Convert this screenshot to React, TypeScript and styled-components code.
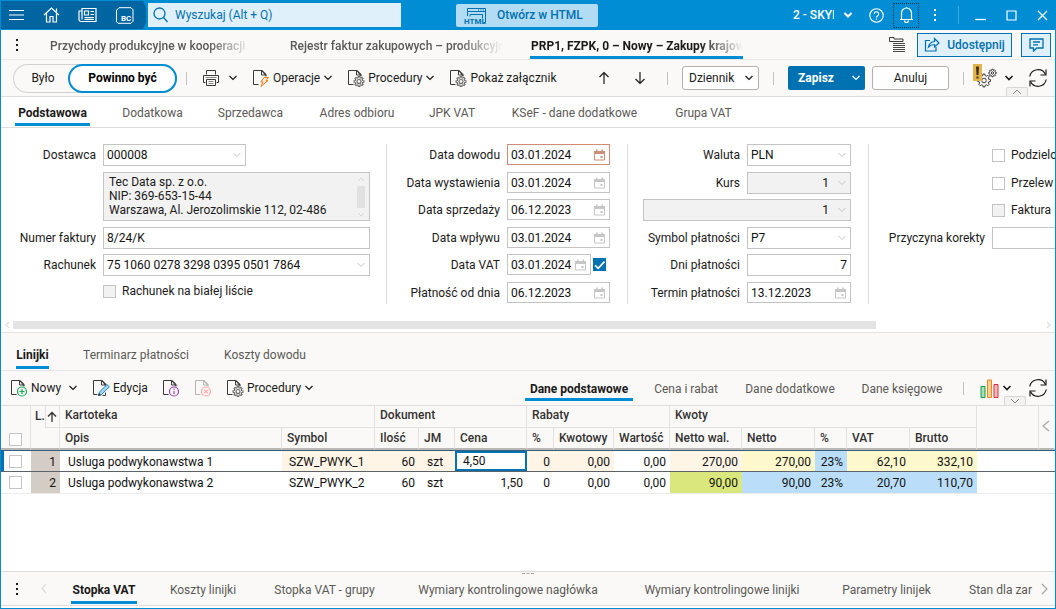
import React from 'react';
import styled, { createGlobalStyle, css } from 'styled-components';

const c = {
  blue: '#008dd4',
  deep: '#0065a0',
  action: '#0071b1',
  panel: '#faf9f8',
  line: '#dedddc',
  field: '#c4c4c4',
  ink: '#1b1a19',
  muted: '#5b5956',
};

const GlobalStyle = createGlobalStyle`
  *, *::before, *::after { box-sizing: border-box; }
  body { margin: 0; background: #fff; color: ${c.ink}; font: 12px/16px Roboto, "Liberation Sans", sans-serif; }
  button, input, select, textarea { font: inherit; color: inherit; margin: 0; padding: 0; border-radius: 0; }
  button { background: none; border: 0; cursor: pointer; display: inline-flex; align-items: center; justify-content: center; white-space: nowrap; }
  svg { display: block; flex: none; }
`;

const Window = styled.div`
  min-height: 100vh;
  display: flex;
  flex-direction: column;
  overflow: hidden;
  border: solid ${c.blue};
  border-width: 0 1px 1px;
`;

/* ---------- title bar ---------- */
const TitleBar = styled.header`
  display: flex;
  align-items: center;
  height: 30px;
  background: ${c.blue};
  color: #fff;
`;
const AppMenu = styled.nav`
  align-self: stretch;
  display: flex;
  align-items: center;
  width: 147px;
  padding-left: 7px;
  gap: 18px;
  background: ${c.deep};
  clip-path: polygon(0 1px, 142px 1px, 145px 8px, 145px 22px, 142px 29px, 0 29px);
`;
const SearchBox = styled.label`
  display: flex;
  align-items: center;
  gap: 7px;
  width: 253px;
  height: 24px;
  padding-left: 5px;
  background: #dff0fa;
  color: ${c.action};
`;
const SearchInput = styled.input`
  flex: 1;
  min-width: 0;
  border: 0;
  background: none;
  outline: 0;
  &::placeholder { color: ${c.action}; opacity: 1; }
`;
const HtmlButton = styled.button`
  justify-content: flex-start;
  width: 142px;
  height: 23px;
  margin-left: 55px;
  padding-left: 8px;
  gap: 9px;
  border-radius: 2px;
  background: #b2dcf3;
  color: ${c.action};
  font-weight: 500;
`;
const TitleActions = styled.div`
  display: flex;
  align-items: center;
  margin-left: auto;
  padding-right: 7px;
`;
const CompanyButton = styled.button`
  gap: 9px;
  margin-right: 16px;
  font-weight: 500;
`;
const CompanyName = styled.span`
  width: 41px;
  overflow: hidden;
  text-align: left;
`;
const BellButton = styled.button`
  width: 26px;
  height: 25px;
  margin: 0 14px 0 9px;
  border: 1px dotted #05314a;
`;
const WindowButtons = styled.div`
  display: flex;
  align-items: center;
  gap: 20px;
  margin-left: 21px;
  padding-left: 16px;
  border-left: 1px solid #3ba9e0;
  height: 18px;
`;

/* ---------- document tabs ---------- */
const DocBar = styled.div`
  display: flex;
  align-items: center;
  height: 30px;
  padding: 0 4px 0 14px;
  background: ${c.panel};
  border-bottom: 1px solid #ebe9e8;
`;
const DocTabs = styled.nav`
  display: flex;
  align-self: stretch;
  flex: 1;
  min-width: 0;
  overflow: hidden;
  gap: 27px;
  margin-left: 31px;
`;
const DocTab = styled.button<{ $active?: boolean; $fade: number }>`
  flex: 0 0 213px;
  justify-content: flex-start;
  padding: 3px 0 0;
  overflow: hidden;
  font-weight: ${p => (p.$active ? 700 : 500)};
  color: ${p => (p.$active ? c.ink : c.muted)};
  ${p => p.$active && css`
    padding: 6px 0 0 1px;
    border-bottom: 3px solid ${c.blue};
  `}
  & > span {
    width: ${p => p.$fade}px;
    overflow: hidden;
    text-align: left;
    mask-image: linear-gradient(to right, #000 calc(100% - 44px), transparent);
  }
`;
const DocActions = styled.div`
  display: flex;
  align-items: center;
  gap: 9px;
`;
const ShareButton = styled.button<{ $w: number }>`
  width: ${p => p.$w}px;
  height: 24px;
  gap: 7px;
  border: 1px solid ${c.action};
  background: #dff0fa;
  color: ${c.action};
  font-weight: 500;
`;

/* ---------- toolbars ---------- */
const ToolBar = styled.div`
  position: relative;
  display: flex;
  align-items: center;
  height: 37px;
  padding: 0 7px 0 12px;
  background: ${c.panel};
  border-bottom: 1px solid ${c.line};
`;
const GridToolBar = styled(ToolBar)`
  height: 36px;
  padding-left: 9px;
  border-top: 1px solid #e8e6e5;
`;
const Group = styled.div<{ $gap: number; $push?: boolean; $left?: number; $right?: number }>`
  display: flex;
  align-items: center;
  align-self: stretch;
  gap: ${p => p.$gap}px;
  margin-left: ${p => (p.$push ? 'auto' : '0')};
  padding: 0 ${p => p.$right || 0}px 0 ${p => p.$left || 0}px;
`;
const Divider = styled.span<{ $m?: number }>`
  width: 1px;
  height: 13px;
  margin: 0 ${p => p.$m || 0}px;
  background: #c4c2c0;
`;
const Toggle = styled.div`
  display: flex;
  width: 164px;
  height: 29px;
  border-radius: 15px;
  box-shadow: inset 0 0 0 1px #d3d1cf;
`;
const ToggleOption = styled.button<{ $on?: boolean }>`
  width: ${p => (p.$on ? 109 : 55)}px;
  padding-left: ${p => (p.$on ? 0 : 5)}px;
  border-radius: 15px;
  ${p => p.$on && css`
    border: 2px solid ${c.blue};
    background: #fff;
    font-weight: 700;
    color: #000;
  `}
`;
const ToolButton = styled.button<{ $tail?: number }>`
  gap: 3px;
  & > svg:last-child:not(:first-child) { margin-left: ${p => p.$tail || 0}px; }
`;
const PrintButton = styled(ToolButton)`
  width: 36px;
  justify-content: space-between;
`;
const JournalSelect = styled.div`
  display: grid;
  align-items: center;
  width: 77px;
  height: 24px;
  border: 1px solid #b3b0ad;
  border-radius: 3px;
  background: #fff;
  & > * { grid-area: 1 / 1; }
  & > svg { justify-self: end; margin-right: 4px; pointer-events: none; }
`;
const PlainSelect = styled.select`
  appearance: none;
  width: 100%;
  height: 100%;
  padding: 0 6px;
  border: 0;
  background: none;
`;
const SaveButton = styled.button`
  width: 77px;
  height: 24px;
  gap: 17px;
  padding-left: 6px;
  border-radius: 2px;
  background: ${c.action};
  color: #fff;
  font-weight: 700;
`;
const CancelButton = styled.button`
  width: 77px;
  height: 24px;
  border: 1px solid #b3b0ad;
  border-radius: 3px;
  background: #fff;
`;
const Collapse = styled.button<{ $right: number }>`
  position: absolute;
  right: ${p => p.$right}px;
  bottom: 0;
  width: 22px;
  height: 9px;
  border: 1px solid #d8d6d4;
  border-bottom: 0;
  border-radius: 2px 2px 0 0;
  background: #f3f2f1;
  color: #8a8886;
`;

/* ---------- section tabs ---------- */
const TabRow = styled.nav<{ $h: number; $gap: number; $left: number; $bg?: string; $edge?: boolean }>`
  display: flex;
  height: ${p => p.$h}px;
  gap: ${p => p.$gap}px;
  padding-left: ${p => p.$left}px;
  background: ${p => p.$bg || 'transparent'};
  border-bottom: ${p => (p.$edge ? `1px solid ${c.line}` : '0')};
`;
const Tab = styled.button<{ $w: number; $active?: boolean; $top?: number; $bottom?: number }>`
  position: relative;
  flex: none;
  width: ${p => p.$w}px;
  padding-top: ${p => p.$top || 0}px;
  color: ${p => (p.$active ? c.ink : c.muted)};
  font-weight: ${p => (p.$active ? 700 : 400)};
  &::after {
    content: '';
    display: ${p => (p.$active ? 'block' : 'none')};
    position: absolute;
    left: 0;
    right: 0;
    bottom: ${p => p.$bottom || 0}px;
    height: 3px;
    background: ${c.blue};
  }
`;

/* ---------- form ---------- */
const FormPane = styled.section`
  display: flex;
  flex-direction: column;
  padding: 16px 0 1px;
  border-bottom: 1px solid #e5e4e3;
`;
const FormScroll = styled.div`
  display: flex;
  overflow: hidden;
`;
const Column = styled.div<{ $label: number; $field: number; $end: number }>`
  display: grid;
  flex: none;
  grid-template-columns: ${p => p.$label}px ${p => p.$field}px;
  grid-template-rows: 28px 27px 28px 27px 28px 22px;
  column-gap: 7px;
  padding-right: ${p => p.$end}px;
  align-items: start;
  & + & { border-left: 1px solid ${c.line}; }
`;
const Label = styled.label<{ $row: number }>`
  grid-area: ${p => p.$row} / 1;
  line-height: 22px;
  text-align: right;
  white-space: nowrap;
`;
const Box = styled.div<{ $row: number; $w?: number; $off?: boolean; $alert?: boolean; $wide?: boolean; $date?: boolean }>`
  grid-row: ${p => p.$row};
  grid-column: ${p => (p.$wide ? '1 / 3' : '2')};
  justify-self: end;
  display: flex;
  align-items: center;
  width: ${p => (p.$w ? `${p.$w}px` : '100%')};
  height: ${p => (p.$date ? 21 : 22)}px;
  padding-right: 3px;
  border: 1px solid ${p => (p.$alert ? '#cf8d77' : c.field)};
  background: ${p => (p.$off ? '#f2f2f2' : '#fff')};
  color: ${p => (p.$alert ? '#cf8d77' : '#c6c6c6')};
`;
const LeftBox = styled(Box)`
  justify-self: start;
`;
const Input = styled.input<{ $right?: boolean; $inset?: number }>`
  flex: 1;
  min-width: 0;
  width: 100%;
  padding: 0 ${p => p.$inset || 0}px 0 3px;
  border: 0;
  outline: 0;
  background: none;
  color: #111;
  text-align: ${p => (p.$right ? 'right' : 'left')};
`;
const ComboSelect = styled.select`
  appearance: none;
  flex: 1;
  min-width: 0;
  padding: 0 0 0 3px;
  border: 0;
  background: none;
  color: #111;
`;
const Address = styled.div`
  grid-area: 2 / 2 / 4 / 3;
  display: flex;
  height: 49px;
  border: 1px solid ${c.field};
  background: #f2f2f2;
`;
const AddressText = styled.textarea`
  flex: 1;
  min-width: 0;
  height: 47px;
  padding: 2px 0 0 5px;
  border: 0;
  resize: none;
  overflow: hidden;
  background: none;
  line-height: 14px;
  white-space: pre;
`;
const AddressScroll = styled.div`
  display: flex;
  flex-direction: column;
  align-items: center;
  gap: 4px;
  width: 16px;
  padding-top: 4px;
  color: #d5d5d5;
  & > i { width: 8px; height: 22px; background: #e1e1e1; }
`;
const CheckLine = styled.label<{ $row: number }>`
  grid-row: ${p => p.$row};
  grid-column: 2;
  display: flex;
  align-items: center;
  gap: 6px;
  height: ${p => (p.$row === 6 ? 18 : 22)}px;
  white-space: nowrap;
`;
const DateWithCheck = styled.div`
  grid-area: 5 / 2;
  display: flex;
  align-items: center;
  gap: 2px;
`;
const Check = styled.input.attrs({ type: 'checkbox' })<{ $dim?: boolean }>`
  appearance: none;
  display: block;
  flex: none;
  width: 13px;
  height: 13px;
  border: 1px solid ${c.field};
  background: ${p => (p.$dim ? '#f2f2f2' : '#fff')};
  &:checked {
    border-color: ${c.action};
    background: ${c.action} url("data:image/svg+xml,%3Csvg xmlns='http://www.w3.org/2000/svg' viewBox='0 0 12 12'%3E%3Cpath d='M1.5 6.5l3 3 6-6.500' fill='none' stroke='white' stroke-width='1.600'/%3E%3C/svg%3E") center / 12px no-repeat;
  }
`;
const ScrollBar = styled.div`
  display: flex;
  align-items: center;
  justify-content: space-between;
  height: 12px;
  margin-top: 15px;
  padding: 0 4px;
  color: #dcdcdc;
`;
const Thumb = styled.div`
  flex: 0 0 82.5%;
  height: 8px;
  margin: 0 auto 0 3px;
  background: #e4e4e4;
`;

/* ---------- grid ---------- */
const GridPane = styled.section`
  flex: 1;
  overflow: hidden;
`;
const Table = styled.table`
  width: 100%;
  table-layout: fixed;
  border-collapse: separate;
  border-spacing: 0;
`;
const Th = styled.th<{ $last?: boolean; $noRight?: boolean }>`
  height: 22px;
  padding: 0 0 0 5px;
  overflow: hidden;
  background: ${c.panel};
  border-right: 1px solid ${p => (p.$noRight ? 'transparent' : '#e3e1df')};
  border-bottom: ${p => (p.$last ? '2px solid #b9b8b7' : '1px solid #e3e1df')};
  font-weight: 500;
  line-height: 18px;
  text-align: left;
  white-space: nowrap;
  color: #323130;
  vertical-align: ${p => (p.$last ? 'middle' : 'top')};
`;
const CheckTh = styled(Th)`
  vertical-align: bottom;
  padding: 0 0 2px 8px;
`;
const SortTh = styled(Th)`
  vertical-align: top;
  padding: 0 0 0 4px;
`;
const SortBox = styled.div`
  display: flex;
  justify-content: space-between;
  height: 22px;
  line-height: 20px;
  & > button { width: 17px; border-left: 1px solid #e3e1df; border-bottom: 1px solid #e3e1df; }
`;
const NavTh = styled(Th)`
  vertical-align: top;
  padding: 14px 0 0 3px;
  color: #a8a6a4;
`;
const Row = styled.tr<{ $current?: boolean }>`
  & > td {
    border-top: ${p => (p.$current ? '1px solid #35617f' : '0')};
    border-bottom: 1px solid ${p => (p.$current ? '#5d6266' : '#ececec')};
    padding-top: ${p => (p.$current ? 2 : 1)}px;
  }
  & > td:first-child {
    padding-top: 0;
    box-shadow: ${p => (p.$current ? `inset 3px 0 0 ${c.action}` : 'none')};
  }
`;
const Td = styled.td<{ $bg?: string; $num?: boolean; $pad?: number }>`
  height: 22px;
  padding: 0 ${p => (p.$num ? 4 : 0)}px 0 ${p => p.$pad ?? 0}px;
  overflow: hidden;
  background: ${p => p.$bg || '#fff'};
  text-align: ${p => (p.$num ? 'right' : 'left')};
  line-height: 18px;
  white-space: nowrap;
  color: #111;
`;
const EditTd = styled(Td)`
  && { padding: 0; }
`;
const CellInput = styled.input`
  display: block;
  width: 100%;
  height: 20px;
  padding: 0 0 1px 6px;
  border: 2px solid ${c.action};
  background: #fff;
  outline: 0;
`;

/* ---------- footer ---------- */
const Footer = styled.footer`
  position: relative;
  display: flex;
  align-items: center;
  height: 35px;
  margin-bottom: 2px;
  padding: 0 7px 0 14px;
  background: ${c.panel};
  border: solid ${c.line};
  border-width: 1px 0;
`;
const FooterTabs = styled(TabRow)`
  flex: 1;
  min-width: 0;
  overflow: hidden;
  margin-left: 20px;
`;
const FooterPrev = styled.button`
  width: 10px;
  margin-right: -6px;
  color: #dedcda;
`;
const FooterNext = styled.button`
  color: #a8a6a4;
`;
const Grip = styled.span`
  position: absolute;
  top: 1px;
  left: calc(50% - 6px);
  width: 12px;
  border-top: 1px dashed #a8a6a4;
`;

/* ---------- icons ---------- */
type IconProps = { w: number; h: number; box?: string; sw?: number; children: React.ReactNode };
const Icon = ({ w, h, box, sw = 1, children }: IconProps) => (
  <svg width={w} height={h} viewBox={box || `0 0 ${w} ${h}`} fill="none" stroke="currentColor" strokeWidth={sw} aria-hidden="true">
    {children}
  </svg>
);
const Chevron = ({ sw = 1.2 }: { sw?: number }) => (
  <Icon w={10} h={8} sw={sw}><path d="M1.500 2l3.500 3.500L8.500 2" /></Icon>
);
const SideChevron = ({ dir, w, h }: { dir: 'left' | 'right'; w: number; h: number }) => (
  <Icon w={w} h={h} sw={1.2}>
    <path d={dir === 'left' ? `M${w - 1} 1L1 ${h / 2}l${w - 2} ${h / 2 - 1}` : `M1 1l${w - 2} ${h / 2 - 1}L1 ${h - 1}`} />
  </Icon>
);
const Dots = () => (
  <Icon w={4} h={14}>
    <g fill="currentColor" stroke="none"><rect x="1" y="1" width="2" height="2" /><rect x="1" y="6" width="2" height="2" /><rect x="1" y="11" width="2" height="2" /></g>
  </Icon>
);
const gearOutline = (cx: number, cy: number, r: number, teeth: number) => {
  const step = (Math.PI * 2) / teeth;
  const at = (a: number, d: number) => `${(cx + Math.cos(a) * d).toFixed(2)} ${(cy + Math.sin(a) * d).toFixed(2)}`;
  let d = '';
  for (let i = 0; i < teeth; i += 1) {
    const a = i * step - Math.PI / 2;
    d += `${i ? 'L' : 'M'}${at(a - step * 0.32, r * 0.76)}L${at(a - step * 0.2, r)}L${at(a + step * 0.2, r)}L${at(a + step * 0.32, r * 0.76)}`;
  }
  return `${d}Z`;
};
const DocIcon = ({ kind }: { kind: 'bolt' | 'gear' | 'plus' | 'pen' | 'info' | 'del' }) => (
  <Icon w={18} h={18}>
    <g stroke="#3b3a39" opacity={kind === 'del' ? 0.35 : 1}>
      <path d={kind === 'pen' ? 'M5.500 15.500H1.500V1.500h8' : 'M6.500 15.500H1.500V1.500h8'} />
      <path d="M9.500 1.500l4.500 4.500V7.500M9.500 1.500V6H14" />
      <path d="M9 1h1.200l4.300 4.300V6.500h-1.500z" fill="#3b3a39" stroke="none" />
    </g>
    {kind === 'gear' && <g stroke="#6b6967" strokeWidth="1.100"><path d={gearOutline(12, 12.5, 5, 8)} /><circle cx="12" cy="12.500" r="2" /></g>}
    {kind === 'bolt' && <path d="M12 8.500h4.500l-2.500 3h2l-7 6 2-4.500H8.800z" stroke="#ef7d1a" fill="#fdebd8" />}
    {kind === 'plus' && <g stroke="#22a559" strokeWidth="1.200"><circle cx="12" cy="12.500" r="4.500" fill="#eefaf2" /><path d="M12 10v5M9.500 12.500h5" /></g>}
    {kind === 'info' && <g stroke="#a03bb0" strokeWidth="1.200"><circle cx="12" cy="12.500" r="4.500" fill="#fff" /><path d="M12 11.700v3.300M12 9.600v1.200" /></g>}
    {kind === 'del' && <g stroke="#f4a9a6" strokeWidth="1.200"><circle cx="12" cy="12.500" r="4.500" fill="#fdf3f3" /><path d="M10.300 10.800l3.400 3.400M13.700 10.800l-3.400 3.400" /></g>}
    {kind === 'pen' && <g><path d="M6.500 16.500l1-3.500 7.500-7.500 2.300 2.300-7.500 7.500z" stroke="#1c84c6" fill="#a9d7f2" /><path d="M6 17l1-3 2.200 2.200z" fill="#3b3a39" stroke="none" /><path d="M10.500 16.500h3v-3" stroke="#3b3a39" /></g>}
  </Icon>
);
const RefreshIcon = () => (
  <Icon w={20} h={20} sw={1.2}>
    <path d="M1.800 8.500A8.300 8.300 0 0 1 17.500 6.500M18.200 11.500A8.300 8.300 0 0 1 2.500 13.500" />
    <path d="M18 1.500v5.500h-5.500M2 18.500V13h5.500" />
  </Icon>
);
const ArrowUp = () => <Icon w={12} h={14} sw={1.2}><path d="M6 13V1.500M1.500 6L6 1.500 10.500 6" /></Icon>;
const ArrowDown = () => <Icon w={12} h={14} sw={1.2}><path d="M6 1v11.500M1.500 8L6 12.500 10.500 8" /></Icon>;
const CalendarIcon = () => (
  <Icon w={13} h={12}>
    <path d="M1.500 2.500h10v8.500h-10z" />
    <path d="M1 2h11v3H1zM3 .5h1.500V2H3zM8.500.5H10V2H8.500z" fill="currentColor" stroke="none" />
    <rect x="7.500" y="7" width="2" height="2" fill="currentColor" stroke="none" />
  </Icon>
);

/* ---------- composed parts ---------- */
const DateField = ({ id, row, value, alert, w }: { id: string; row: number; value: string; alert?: boolean; w?: number }) => (
  <Box $row={row} $date $alert={alert} $w={w}>
    <Input id={id} defaultValue={value} />
    <CalendarIcon />
  </Box>
);

type TabDef = { text: string; w: number };
const Tabs = ({ items, top, bottom }: { items: TabDef[]; top?: number; bottom?: number }) => (
  <>
    {items.map((t, i) => (
      <Tab key={t.text} type="button" $w={t.w} $active={i === 0} $top={top} $bottom={bottom}>{t.text}</Tab>
    ))}
  </>
);

const formTabs: TabDef[] = [
  { text: 'Podstawowa', w: 75 }, { text: 'Dodatkowa', w: 69 }, { text: 'Sprzedawca', w: 71 }, { text: 'Adres odbioru', w: 86 },
  { text: 'JPK VAT', w: 48 }, { text: 'KSeF - dane dodatkowe', w: 141 }, { text: 'Grupa VAT', w: 61 },
];
const lineTabs: TabDef[] = [{ text: 'Linijki', w: 33 }, { text: 'Terminarz płatności', w: 118 }, { text: 'Koszty dowodu', w: 84 }];
const viewTabs: TabDef[] = [
  { text: 'Dane podstawowe', w: 108 }, { text: 'Cena i rabat', w: 74 }, { text: 'Dane dodatkowe', w: 102 }, { text: 'Dane księgowe', w: 90 },
];
const footTabs: TabDef[] = [
  { text: 'Stopka VAT', w: 66 }, { text: 'Koszty linijki', w: 76 }, { text: 'Stopka VAT - grupy', w: 111 },
  { text: 'Wymiary kontrolingowe nagłówka', w: 200 }, { text: 'Wymiary kontrolingowe linijki', w: 172 },
  { text: 'Parametry linijek', w: 101 }, { text: 'Stan dla zar', w: 71 },
];
const dates = [
  { id: 'dowod', label: 'Data dowodu', value: '03.01.2024', alert: true },
  { id: 'wystawienie', label: 'Data wystawienia', value: '03.01.2024' },
  { id: 'sprzedaz', label: 'Data sprzedaży', value: '06.12.2023' },
  { id: 'wplyw', label: 'Data wpływu', value: '03.01.2024' },
  { id: 'vat', label: 'Data VAT', value: '03.01.2024' },
  { id: 'platnosc', label: 'Płatność od dnia', value: '06.12.2023' },
];
const columnWidths = [30, 29, 222, 93, 44, 36, 72, 27, 60, 56, 72, 73, 32, 63, 67];
const columnNames = ['Opis', 'Symbol', 'Ilość', 'JM', 'Cena', '%', 'Kwotowy', 'Wartość', 'Netto wal.', 'Netto', '%', 'VAT', 'Brutto'];
const cream = '#fef5e7';
const yellow = '#fef9cd';
const sky = '#badefa';
const lime = '#dae77c';

export default function App() {
  return (
    <>
      <GlobalStyle />
      <Window>
        <TitleBar>
          <AppMenu>
            <button type="button" aria-label="Menu"><Icon w={17} h={12} sw={1.2}><path d="M1 1.500h15M1 6h15M1 10.500h15" /></Icon></button>
            <button type="button" aria-label="Start"><Icon w={17} h={16} sw={1.2}><path d="M1 8l7.500-7L16 8M3.500 6.500V15H7V9.500h3V15h3.500V6.500M13.500 1.500v3" /></Icon></button>
            <button type="button" aria-label="Nowości"><Icon w={19} h={16} sw={1.2}><path d="M4 1.500h14v13H3a2 2 0 0 1-2-2V4h3zM4 4v8.500M6.500 4h4v4h-4zM12.500 4.500H16M12.500 7.500H16M6.500 10.500H16M6.500 12.300H16" /></Icon></button>
            <button type="button" aria-label="BC">
              <Icon w={19} h={17}>
                <path d="M4 .7h12l2 2v11.600l-2 2H3l-1.500-1.500V3.200z" />
                <text x="6" y="14" fill="currentColor" stroke="none" fontSize="8" fontWeight="700" fontFamily="Roboto, sans-serif">BC</text>
              </Icon>
            </button>
          </AppMenu>
          <SearchBox>
            <Icon w={15} h={16} sw={1.3}><circle cx="6.500" cy="6.500" r="5.500" /><path d="M10.500 10.500l4 4.500" /></Icon>
            <SearchInput aria-label="Wyszukaj" placeholder="Wyszukaj (Alt + Q)" />
          </SearchBox>
          <HtmlButton type="button">
            <Icon w={24} h={19}>
              <path d="M3.500 10V2.500h18v14h-2M3.500 5.500h18M6 10.500V8.500h12.500v4M14 4h1M16.500 4h1M19 4h1" />
              <text x="0" y="18" fill="currentColor" stroke="none" fontSize="8" fontWeight="700" fontFamily="Roboto, sans-serif">HTML</text>
            </Icon>
            Otwórz w HTML
          </HtmlButton>
          <TitleActions>
            <CompanyButton type="button"><CompanyName>2 - SKYI</CompanyName><Chevron sw={2} /></CompanyButton>
            <button type="button" aria-label="Pomoc">
              <Icon w={15} h={15} sw={1.1}><circle cx="7.500" cy="7.500" r="6.700" /><path d="M5.300 6a2.200 2.200 0 1 1 3.400 1.800q-1.200.7-1.200 1.700M7.500 10.500v1.200" /></Icon>
            </button>
            <BellButton type="button" aria-label="Powiadomienia">
              <Icon w={15} h={18} sw={1.2}><path d="M1 13.500h13M2.500 13V7a5 5 0 0 1 10 0v6M5.500 14.500a2 2 0 0 0 4 0M7.500 1v1" /></Icon>
            </BellButton>
            <button type="button" aria-label="Więcej"><Dots /></button>
            <WindowButtons>
              <button type="button" aria-label="Minimalizuj"><Icon w={11} h={11} sw={1.3}><path d="M0 9.500h11" /></Icon></button>
              <button type="button" aria-label="Maksymalizuj"><Icon w={11} h={11} sw={1.2}><path d="M1 1h9v9H1z" /></Icon></button>
              <button type="button" aria-label="Zamknij"><Icon w={11} h={11} sw={1.2}><path d="M1 1l9 9M10 1l-9 9" /></Icon></button>
            </WindowButtons>
          </TitleActions>
        </TitleBar>

        <DocBar>
          <button type="button" aria-label="Opcje"><Dots /></button>
          <DocTabs>
            <DocTab type="button" $fade={202}><span>Przychody produkcyjne w kooperacji</span></DocTab>
            <DocTab type="button" $fade={213}><span>Rejestr faktur zakupowych – produkcyjnych</span></DocTab>
            <DocTab type="button" $fade={212} $active><span>PRP1, FZPK, 0 – Nowy – Zakupy krajowe</span></DocTab>
          </DocTabs>
          <DocActions>
            <button type="button" aria-label="Struktura">
              <Icon w={20} h={17}>
                <path d="M1.500 5.500V1.500h4.500v1.500h9v2.500z" stroke="#3b3a39" />
                <path d="M5 7.500h12M5 9.500h12M5 11.500h12M5 13.500h12M5 15.500h12" stroke="#4a4846" />
              </Icon>
            </button>
            <ShareButton type="button" $w={95}>
              <Icon w={16} h={15} sw={1.2}><path d="M6 3.500H1.500v10.500h10.500V10M4.500 10q1-5 6-5.500V1.500L15 6l-4.500 4V7.500q-3.500 0-6 2.500z" /></Icon>
              Udostępnij
            </ShareButton>
            <ShareButton type="button" $w={30} aria-label="Komentarze">
              <Icon w={15} h={14} sw={1.3}><path d="M1 1h13v9H8l-3.500 3v-3H1zM4 4h7M4 6.800h5" /></Icon>
            </ShareButton>
          </DocActions>
        </DocBar>

        <ToolBar>
          <Toggle>
            <ToggleOption type="button">Było</ToggleOption>
            <ToggleOption type="button" $on>Powinno być</ToggleOption>
          </Toggle>
          <Divider $m={9} />
          <Group $gap={14} $left={6}>
            <PrintButton type="button" aria-label="Drukuj">
              <Icon w={18} h={18}>
                <g stroke="#3b3a39">
                  <path d="M4.500 5.500v-4h9v4M3.500 13.500h-2v-7h15v7h-2M4.500 10.500h9v6h-9z" />
                  <path d="M3.500 8.500h11M6.500 12.500h5M6.500 14.500h5" stroke="#8a8886" />
                </g>
              </Icon>
              <Chevron />
            </PrintButton>
            <ToolButton type="button"><DocIcon kind="bolt" />Operacje<Chevron /></ToolButton>
            <ToolButton type="button"><DocIcon kind="gear" />Procedury<Chevron /></ToolButton>
            <ToolButton type="button"><DocIcon kind="gear" />Pokaż załącznik</ToolButton>
          </Group>
          <Group $gap={14} $push>
            <Group $gap={24} $right={7}>
              <button type="button" aria-label="Poprzedni"><ArrowUp /></button>
              <button type="button" aria-label="Następny"><ArrowDown /></button>
            </Group>
            <Divider />
            <JournalSelect>
              <PlainSelect aria-label="Dziennik" defaultValue="Dziennik"><option>Dziennik</option></PlainSelect>
              <Chevron />
            </JournalSelect>
            <Divider />
            <Group $gap={7}>
              <SaveButton type="button">Zapisz<Chevron /></SaveButton>
              <CancelButton type="button">Anuluj</CancelButton>
            </Group>
            <Group $gap={9}>
              <Divider />
              <ToolButton type="button" aria-label="Ustawienia" $tail={4}>
                <Icon w={24} h={28}>
                  <g stroke="#3b3a39">
                    <path d={gearOutline(11, 16.5, 6.5, 8)} /><circle cx="11" cy="16.500" r="2.300" />
                    <path d={gearOutline(19.5, 9, 3.8, 8)} /><circle cx="19.500" cy="9" r="1.200" />
                  </g>
                  <rect width="9" height="17" fill="#e3b34c" stroke="none" />
                  <path d="M3 2.500h3l-.5 8.500h-2zM3.500 12.500h2v2h-2z" fill="#3b3020" stroke="none" />
                </Icon>
                <Chevron sw={1.6} />
              </ToolButton>
            </Group>
            <button type="button" aria-label="Odśwież"><RefreshIcon /></button>
          </Group>
          <Collapse type="button" $right={27} aria-label="Zwiń"><Icon w={10} h={6}><path d="M1 5l4-4 4 4" /></Icon></Collapse>
        </ToolBar>

        <TabRow $h={31} $gap={28} $left={14} $bg="#fff" $edge><Tabs items={formTabs} top={2} bottom={1} /></TabRow>

        <FormPane>
          <FormScroll>
            <Column $label={95} $field={267} $end={16}>
              <Label $row={1} htmlFor="dostawca">Dostawca</Label>
              <LeftBox $row={1} $w={143}><Input id="dostawca" defaultValue="000008" /><Chevron sw={1} /></LeftBox>
              <Address>
                <AddressText aria-label="Adres dostawcy" readOnly defaultValue={'Tec Data sp. z o.o.\nNIP: 369-653-15-44\nWarszawa, Al. Jerozolimskie 112, 02-486'} />
                <AddressScroll>
                  <Icon w={8} h={5}><path d="M1 4l3-3 3 3" /></Icon><i /><Icon w={8} h={5}><path d="M1 1l3 3 3-3" /></Icon>
                </AddressScroll>
              </Address>
              <Label $row={4} htmlFor="numer">Numer faktury</Label>
              <Box $row={4}><Input id="numer" defaultValue="8/24/K" /></Box>
              <Label $row={5} htmlFor="rachunek">Rachunek</Label>
              <Box $row={5}><Input id="rachunek" defaultValue="75 1060 0278 3298 0395 0501 7864" /><Chevron sw={1} /></Box>
              <CheckLine $row={6}><Check $dim />Rachunek na białej liście</CheckLine>
            </Column>

            <Column $label={113} $field={103} $end={17}>
              {dates.map((d, i) => (
                <React.Fragment key={d.id}>
                  <Label $row={i + 1} htmlFor={d.id}>{d.label}</Label>
                  {d.id === 'vat' ? (
                    <DateWithCheck><DateField id={d.id} row={1} value={d.value} w={84} /><Check defaultChecked aria-label="Data VAT aktywna" /></DateWithCheck>
                  ) : (
                    <DateField id={d.id} row={i + 1} value={d.value} alert={d.alert} />
                  )}
                </React.Fragment>
              ))}
            </Column>

            <Column $label={112} $field={104} $end={17}>
              <Label $row={1} htmlFor="waluta">Waluta</Label>
              <Box $row={1}><ComboSelect id="waluta" defaultValue="PLN"><option>PLN</option></ComboSelect><Chevron sw={1} /></Box>
              <Label $row={2} htmlFor="kurs">Kurs</Label>
              <Box $row={2} $off><Input id="kurs" $right $inset={8} defaultValue="1" /><Chevron sw={1} /></Box>
              <Box $row={3} $off $wide $w={208}><Input aria-label="Przelicznik" $right $inset={8} defaultValue="1" /><Chevron sw={1} /></Box>
              <Label $row={4} htmlFor="symbol">Symbol płatności</Label>
              <Box $row={4}><ComboSelect id="symbol" defaultValue="P7"><option>P7</option></ComboSelect><Chevron sw={1} /></Box>
              <Label $row={5} htmlFor="dni">Dni płatności</Label>
              <Box $row={5}><Input id="dni" $right defaultValue="7" /></Box>
              <Label $row={6} htmlFor="termin">Termin płatności</Label>
              <DateField id="termin" row={6} value="13.12.2023" />
            </Column>

            <Column $label={116} $field={267} $end={17}>
              <CheckLine $row={1}><Check />Podzielo</CheckLine>
              <CheckLine $row={2}><Check />Przelew</CheckLine>
              <CheckLine $row={3}><Check $dim />Faktura</CheckLine>
              <Label $row={4} htmlFor="korekta">Przyczyna korekty</Label>
              <Box $row={4}><Input id="korekta" /></Box>
            </Column>
          </FormScroll>
          <ScrollBar><SideChevron dir="left" w={5} h={8} /><Thumb /><SideChevron dir="right" w={5} h={8} /></ScrollBar>
        </FormPane>

        <TabRow $h={37} $gap={28} $left={15} $bg={c.panel}><Tabs items={lineTabs} top={6} bottom={1} /></TabRow>

        <GridToolBar>
          <Group $gap={14}>
            <ToolButton type="button" $tail={4}><DocIcon kind="plus" />Nowy<Chevron /></ToolButton>
            <ToolButton type="button"><DocIcon kind="pen" />Edycja</ToolButton>
            <ToolButton type="button" aria-label="Informacje"><DocIcon kind="info" /></ToolButton>
            <ToolButton type="button" aria-label="Usuń"><DocIcon kind="del" /></ToolButton>
            <ToolButton type="button"><DocIcon kind="gear" />Procedury<Chevron /></ToolButton>
          </Group>
          <Group $gap={16} $push>
            <TabRow $h={34} $gap={16} $left={0}><Tabs items={viewTabs} top={1} bottom={4} /></TabRow>
            <Divider />
            <ToolButton type="button" aria-label="Wykres">
              <Icon w={19} h={19}>
                <path d="M1 7.500h4v11H1z" fill="#a8dfb9" stroke="#169c46" /><path d="M7.500 1h4v17.500h-4z" fill="#fbd08c" stroke="#ee8422" /><path d="M14 5.500h4v13h-4z" fill="#f5b9bd" stroke="#e02f38" />
              </Icon>
              <Chevron sw={1.6} />
            </ToolButton>
            <button type="button" aria-label="Odśwież linijki"><RefreshIcon /></button>
          </Group>
          <Collapse type="button" $right={29} aria-label="Rozwiń"><Icon w={10} h={6}><path d="M1 1l4 4 4-4" /></Icon></Collapse>
        </GridToolBar>

        <GridPane>
          <Table>
            <colgroup>
              {columnWidths.map((w, i) => <col key={i} width={w} />)}
              <col /><col width={16} />
            </colgroup>
            <thead>
              <tr>
                <CheckTh rowSpan={2} $last><Check aria-label="Zaznacz wszystkie" /></CheckTh>
                <SortTh rowSpan={2} $last><SortBox>L.<button type="button" aria-label="Sortuj"><Icon w={12} h={12} sw={1.3}><path d="M6 11V1.500M2 5.500l4-4 4 4" /></Icon></button></SortBox></SortTh>
                <Th colSpan={2}>Kartoteka</Th>
                <Th colSpan={3}>Dokument</Th>
                <Th colSpan={3}>Rabaty</Th>
                <Th colSpan={5}>Kwoty</Th>
                <Th rowSpan={2} $last />
                <NavTh rowSpan={2} $last $noRight><SideChevron dir="left" w={8} h={12} /></NavTh>
              </tr>
              <tr>{columnNames.map((n, i) => <Th key={i} $last>{n}</Th>)}</tr>
            </thead>
            <tbody>
              <Row $current>
                <Td $pad={8}><Check aria-label="Zaznacz linijkę 1" /></Td>
                <Td $num $bg="#d3cdc5">1</Td>
                <Td $pad={8}>Usluga podwykonawstwa 1</Td>
                <Td $pad={7} $bg={cream}>SZW_PWYK_1</Td>
                <Td $num $bg={cream}>60</Td>
                <Td $pad={8} $bg={cream}>szt</Td>
                <EditTd><CellInput aria-label="Cena" defaultValue="4,50" /></EditTd>
                <Td $num $bg={cream}>0</Td>
                <Td $num $bg={cream}>0,00</Td>
                <Td $num>0,00</Td>
                <Td $num $bg={cream}>270,00</Td>
                <Td $num $bg={yellow}>270,00</Td>
                <Td $num $bg={sky}>23%</Td>
                <Td $num $bg={yellow}>62,10</Td>
                <Td $num $bg={yellow}>332,10</Td>
                <Td colSpan={2} />
              </Row>
              <Row>
                <Td $pad={8}><Check aria-label="Zaznacz linijkę 2" /></Td>
                <Td $num $bg="#d3cdc5">2</Td>
                <Td $pad={8}>Usluga podwykonawstwa 2</Td>
                <Td $pad={7}>SZW_PWYK_2</Td>
                <Td $num>60</Td>
                <Td $pad={8}>szt</Td>
                <Td $num>1,50</Td>
                <Td $num>0</Td>
                <Td $num>0,00</Td>
                <Td $num>0,00</Td>
                <Td $num $bg={lime}>90,00</Td>
                <Td $num $bg={sky}>90,00</Td>
                <Td $num $bg={sky}>23%</Td>
                <Td $num $bg={sky}>20,70</Td>
                <Td $num $bg={sky}>110,70</Td>
                <Td colSpan={2} />
              </Row>
            </tbody>
          </Table>
        </GridPane>

        <Footer>
          <Grip />
          <button type="button" aria-label="Opcje stopki"><Dots /></button>
          <FooterTabs $h={33} $gap={28} $left={0}>
            <FooterPrev type="button" aria-label="Poprzednie zakładki"><SideChevron dir="left" w={6} h={11} /></FooterPrev>
            <Tabs items={footTabs} top={3} bottom={1} />
          </FooterTabs>
          <FooterNext type="button" aria-label="Następne zakładki"><SideChevron dir="right" w={7} h={12} /></FooterNext>
        </Footer>
      </Window>
    </>
  );
}
